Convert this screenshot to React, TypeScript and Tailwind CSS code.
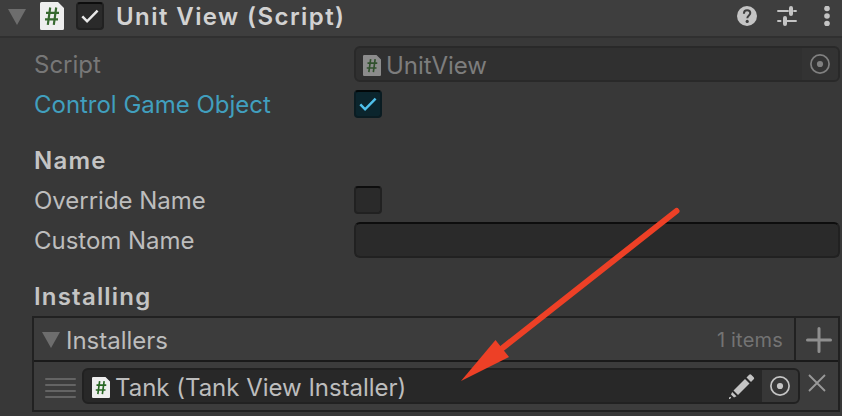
import type { ReactNode } from "react";

function ScriptIcon({ className, page, hash }: { className: string; page: string; hash: string }) {
  return (
    <svg viewBox="0 0 24 28" className={className} fill="none">
      <path d="M1.500 0H18l6 6v20.500a1.500 1.500 0 0 1-1.500 1.500h-21A1.500 1.500 0 0 1 0 26.500V1.500A1.500 1.500 0 0 1 1.500 0Z" fill={page} />
      <path d="M10.200 5.500 7.800 22.800M16.200 5.500 13.800 22.800M6 10.800h13M5 17.300h13" stroke={hash} strokeWidth="2.200" />
    </svg>
  );
}

function Foldout() {
  return (
    <svg viewBox="0 0 18 16" className="mt-px h-4 w-[18px] shrink-0">
      <path d="M0 0h18L9 16Z" fill="#6d6d6d" />
    </svg>
  );
}

function CheckBox({ className, check }: { className: string; check?: string }) {
  return (
    <div className={`flex size-7 shrink-0 rounded-[4px] border-2 ${className}`}>
      {check && (
        <svg viewBox="0 0 24 24" className="size-6" fill="none">
          <path d="m4.300 12.300 4.800 5L19.600 6.700" stroke={check} strokeWidth="2.500" />
        </svg>
      )}
    </div>
  );
}

function Target({ color }: { color: string }) {
  return (
    <svg viewBox="0 0 20 20" className="size-5" fill="none">
      <circle cx="10" cy="10" r="9.100" stroke={color} strokeWidth="1.700" />
      <circle cx="10" cy="10" r="3.100" fill={color} />
    </svg>
  );
}

function Row({ label, className = "", children }: { label: string; className?: string; children?: ReactNode }) {
  return (
    <div className="flex h-10 items-center">
      <div className={`w-80 shrink-0 pt-0.5 ${className}`}>{label}</div>
      {children}
    </div>
  );
}

export default function App() {
  return (
    <div className="relative h-[416px] w-[842px] overflow-hidden bg-[#383838] font-['Inter',sans-serif] text-[24px] leading-[30px] tracking-[-0.020px] whitespace-nowrap text-[#bdbdbd]">
      <header className="flex h-[38px] items-center border-b-2 border-[#303030] bg-[#3e3e3e] pb-1 pl-2">
        <Foldout />
        <ScriptIcon className="ml-[14px] h-7 w-6" page="#eeeeee" hash="#37692f" />
        <CheckBox className="ml-3 border-[#212121] border-t-[#0d0d0d] bg-[#2a2a2a]" check="#e8e8e8" />
        <h1 className="ml-3 pt-0.5 font-semibold tracking-[1.420px] text-[#d2d2d2]">Unit View (Script)</h1>
        <div className="ml-auto flex items-center pr-3">
          <svg viewBox="0 0 20 20" className="size-5" fill="none">
            <circle cx="10" cy="10" r="10" fill="#c4c4c4" />
            <path d="M6.900 7.700c0-2.200 1.300-3.400 3.200-3.400s3.200 1.100 3.200 2.800c0 2.300-3 2.500-3 5.200" stroke="#3e3e3e" strokeWidth="2" />
            <circle cx="10.200" cy="15.400" r="1.600" fill="#3e3e3e" />
          </svg>
          <svg viewBox="0 0 20 20" className="ml-5 size-5" fill="none" stroke="#c4c4c4" strokeLinecap="round">
            <path d="M1 5h10M17 5h2M1 15h2.500M9 15h10" strokeWidth="1.900" />
            <path d="M14 2v6M8 12v6" strokeWidth="4" />
          </svg>
          <svg viewBox="0 0 6 20" className="ml-[27px] h-5 w-1.5" fill="#c4c4c4">
            <circle cx="3" cy="2.500" r="2.800" />
            <circle cx="3" cy="10" r="2.800" />
            <circle cx="3" cy="17.500" r="2.800" />
          </svg>
        </div>
      </header>

      <main className="pt-1.5 pr-0.5 pl-8">
        <section className="pl-0.5">
          <Row label="Script" className="text-[#777777]">
            <div className="flex h-9 flex-1 items-center overflow-hidden rounded-md border-2 border-[#292929] bg-[#303030] pl-[7px] text-[#7d7d7d]">
              <ScriptIcon className="mt-0.5 h-[21px] w-[18px]" page="#8c8c8c" hash="#31512d" />
              <span className="ml-[5px] pt-[3px]">UnitView</span>
              <div className="ml-auto flex h-8 w-9 items-center justify-center bg-[#333333]">
                <Target color="#808080" />
              </div>
            </div>
          </Row>
          <Row label="Control Game Object" className="text-[#419fbe]">
            <CheckBox className="border-[#0a1c22] border-t-[#020809] bg-[#0b252d]" check="#4fc0eb" />
          </Row>
          <div className="pt-4">
            <Row label="Name" className="font-semibold tracking-[1.200px] text-[#c4c4c4]" />
            <Row label="Override Name">
              <CheckBox className="border-[#212121] border-t-[#0d0d0d] bg-[#2a2a2a]" />
            </Row>
            <Row label="Custom Name">
              <div className="h-9 flex-1 rounded-md border-2 border-[#212121] border-t-[#0d0d0d] bg-[#2a2a2a]" />
            </Row>
          </div>
          <div className="pt-4">
            <Row label="Installing" className="font-semibold tracking-[1.200px] text-[#c4c4c4]" />
          </div>
        </section>

        <section className="h-24 border-2 border-[#212121] bg-[#3c3c3c]">
          <div className="flex h-11 items-center border-b-2 border-[#1a1a1a] pl-2">
            <Foldout />
            <span className="ml-1.5 pt-[3px]">Installers</span>
            <span className="ml-auto mr-[11px] pt-px text-[20px] tracking-[0.200px] text-[#737373]">1 items</span>
            <div className="flex h-[42px] w-11 items-center justify-center border-l-2 border-[#212121] pt-0.5 pl-1">
              <svg viewBox="0 0 26 26" className="size-[26px]" fill="none">
                <path d="M13 1.500v23M1.500 13h23" stroke="#8f8f8f" strokeWidth="3" strokeLinecap="round" />
              </svg>
            </div>
          </div>
          <div className="flex h-12 items-center">
            <svg viewBox="0 0 31 20" className="mt-1 ml-[11px] h-5 w-[31px]" fill="none">
              <path d="M1 1h29M1 7h29M1 13h29M1 19h29" stroke="#646464" strokeWidth="2" strokeLinecap="round" />
            </svg>
            <div className="ml-1.5 flex h-9 w-[718px] items-center overflow-hidden rounded-md border-2 border-[#212121] bg-[#282828] pl-2">
              <ScriptIcon className="mt-0.5 h-[21px] w-[18px]" page="#eeeeee" hash="#276622" />
              <span className="ml-[5px] pt-[3px]">Tank (Tank View Installer)</span>
              <svg viewBox="0 0 26 26" className="-mt-px ml-auto size-[26px]" fill="#c4c4c4">
                <path d="m4.500 17.500 4.500 4.500L20.500 10.500 16 6Z" />
                <path d="m17.500 4.500 2.700-2.700q1-1 2 0l2.500 2.500q1 1 0 2L22 9Z" />
                <path d="m3.200 19 4.300 4.300-2.500 1.200-3-3Z" />
                <path d="m0 24.500 1.500-.7.700.7L1 26H0Z" />
              </svg>
              <div className="ml-[7px] flex h-8 w-9 items-center justify-center bg-[#373737]">
                <Target color="#c4c4c4" />
              </div>
            </div>
            <svg viewBox="0 0 18 18" className="ml-[8px] -mt-1.5 size-[18px]" fill="none">
              <path d="m1 1 16 16M17 1 1 17" stroke="#999999" strokeWidth="1.800" />
            </svg>
          </div>
        </section>
      </main>

      <svg viewBox="0 0 842 416" className="pointer-events-none absolute inset-0 h-full w-full" fill="none">
        <path d="M676.500 211 500 350" stroke="#ed4026" strokeWidth="6" strokeLinecap="round" />
        <path d="M461 381 495.500 340 509 357Z" fill="#ed4026" />
      </svg>
    </div>
  );
}
